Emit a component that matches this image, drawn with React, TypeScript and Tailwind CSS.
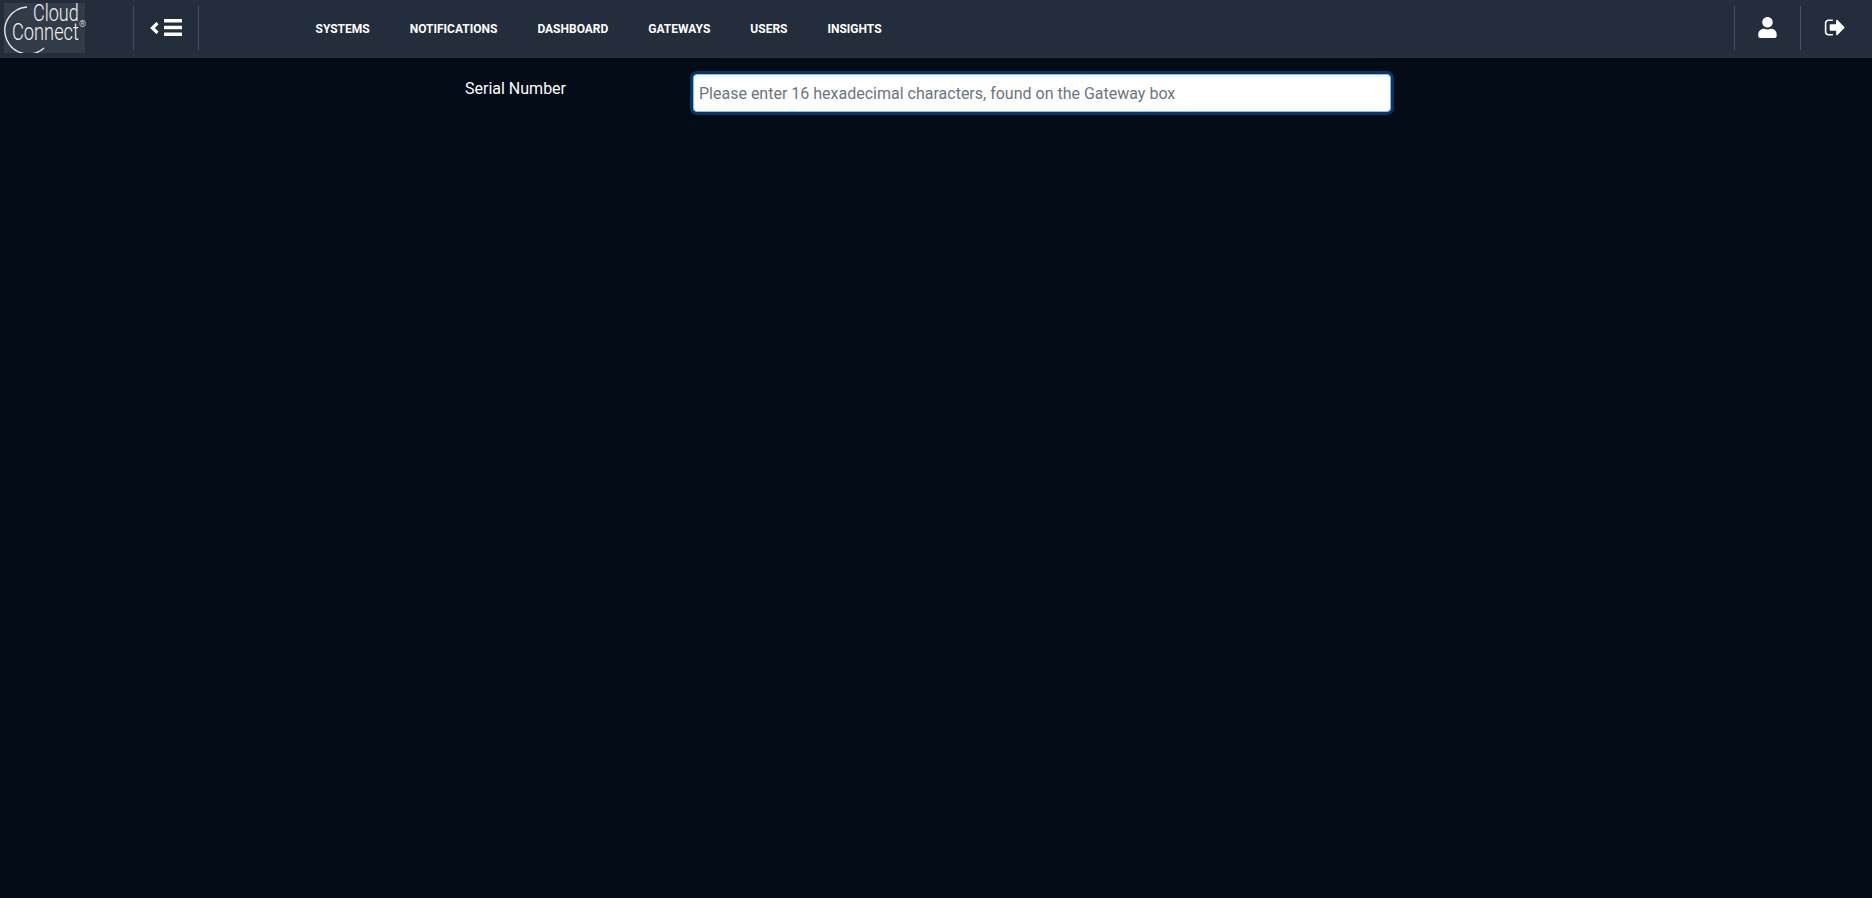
import { FaUser } from "react-icons/fa";

const navItems = ["SYSTEMS", "NOTIFICATIONS", "DASHBOARD", "GATEWAYS", "USERS", "INSIGHTS"];

function Logo() {
  return (
    <div className="relative w-[81px] h-[50px] ml-[4px] mb-[2px] bg-[#323c49] font-['Roboto',sans-serif] font-light text-[#f2f3f4]">
      <svg className="absolute left-0 top-0" width="81" height="50" viewBox="0 0 81 50" fill="none">
        <path d="M23 4 A23.5 23.5 0 1 0 40 45" stroke="#e6e8ea" strokeWidth="1.4" />
      </svg>
      <span className="absolute left-[29px] top-[0px] text-[24px] leading-[20px] origin-left scale-x-[0.75]">Cloud</span>
      <span className="absolute left-[8px] top-[19px] text-[24px] leading-[20px] origin-left scale-x-[0.76]">Connect</span>
      <span className="absolute left-[75px] top-[16px] text-[9px] leading-[10px]">®</span>
    </div>
  );
}

function Divider() {
  return <div className="w-px h-[44px] mb-[2px] bg-[#465160]" />;
}

function ChevronIcon() {
  return (
    <svg width="9" height="12" viewBox="0 0 9 12" fill="none" stroke="#fff" strokeWidth="3.2">
      <path d="M7.5 1 L2.5 6 L7.5 11" />
    </svg>
  );
}

function BarsIcon() {
  return (
    <svg width="18" height="17" viewBox="0 0 18 17" fill="#fff">
      <rect width="18" height="3.6" rx="0.5" />
      <rect y="6.7" width="18" height="3.6" rx="0.5" />
      <rect y="13.4" width="18" height="3.6" rx="0.5" />
    </svg>
  );
}

function SignOutIcon() {
  return (
    <svg width="21" height="23" viewBox="0 0 1664 1792" fill="#fff">
      <path d="M704 1440q0 4 1 20t.5 26.5-3 23.5-10 19.5-20.5 6.5h-320q-119 0-203.5-84.5t-84.5-203.5v-704q0-119 84.5-203.5t203.5-84.5h320q13 0 22.5 9.5t9.5 22.5q0 4 1 20t.5 26.5-3 23.5-10 19.5-20.5 6.5h-320q-66 0-113 47t-47 113v704q0 66 47 113t113 47h312l11.5 1 11.5 3 8 5.5 7 9 2 13.5zm928-544q0 26-19 45l-544 544q-19 19-45 19t-45-19-19-45v-288h-448q-26 0-45-19t-19-45v-384q0-26 19-45t45-19h448v-288q0-26 19-45t45-19 45 19l544 544q19 19 19 45z" />
    </svg>
  );
}

export default function App() {
  return (
    <div className="h-screen overflow-hidden bg-[#030c17] font-['Roboto',sans-serif]">
      <header className="flex items-center h-[58px] bg-[#232d3b] text-white">
        <Logo />
        <div className="ml-[48px]">
          <Divider />
        </div>
        <div className="flex items-center justify-center w-[64px] gap-[5px] mb-[3px]">
          <ChevronIcon />
          <BarsIcon />
        </div>
        <Divider />
        <nav className="flex items-center gap-[40px] ml-[116.5px]">
          {navItems.map((item) => (
            <a key={item} className="text-[12px] font-bold text-white">
              {item}
            </a>
          ))}
        </nav>
        <div className="flex items-center ml-auto">
          <Divider />
          <div className="flex justify-center w-[65px] pr-[1px] mb-[4px]">
            <FaUser className="w-[19px] h-[21px]" />
          </div>
          <Divider />
          <div className="flex justify-center w-[71px] pr-[5px] mb-[4px]">
            <SignOutIcon />
          </div>
        </div>
      </header>
      <main className="flex pl-[465px] pt-[16px]">
        <label className="w-[228px] text-[16px] leading-[24px] pt-[3px] text-white">Serial Number</label>
        <input
          className="w-[698px] h-[38px] pl-[5px] pr-[5px] bg-white rounded-[4px] text-[16px] text-[#495057] placeholder:text-[#6c757d] border border-[#80bdff] outline-none shadow-[0_0_0_3px_#0a3463]"
          placeholder="Please enter 16 hexadecimal characters, found on the Gateway box"
        />
      </main>
    </div>
  );
}
